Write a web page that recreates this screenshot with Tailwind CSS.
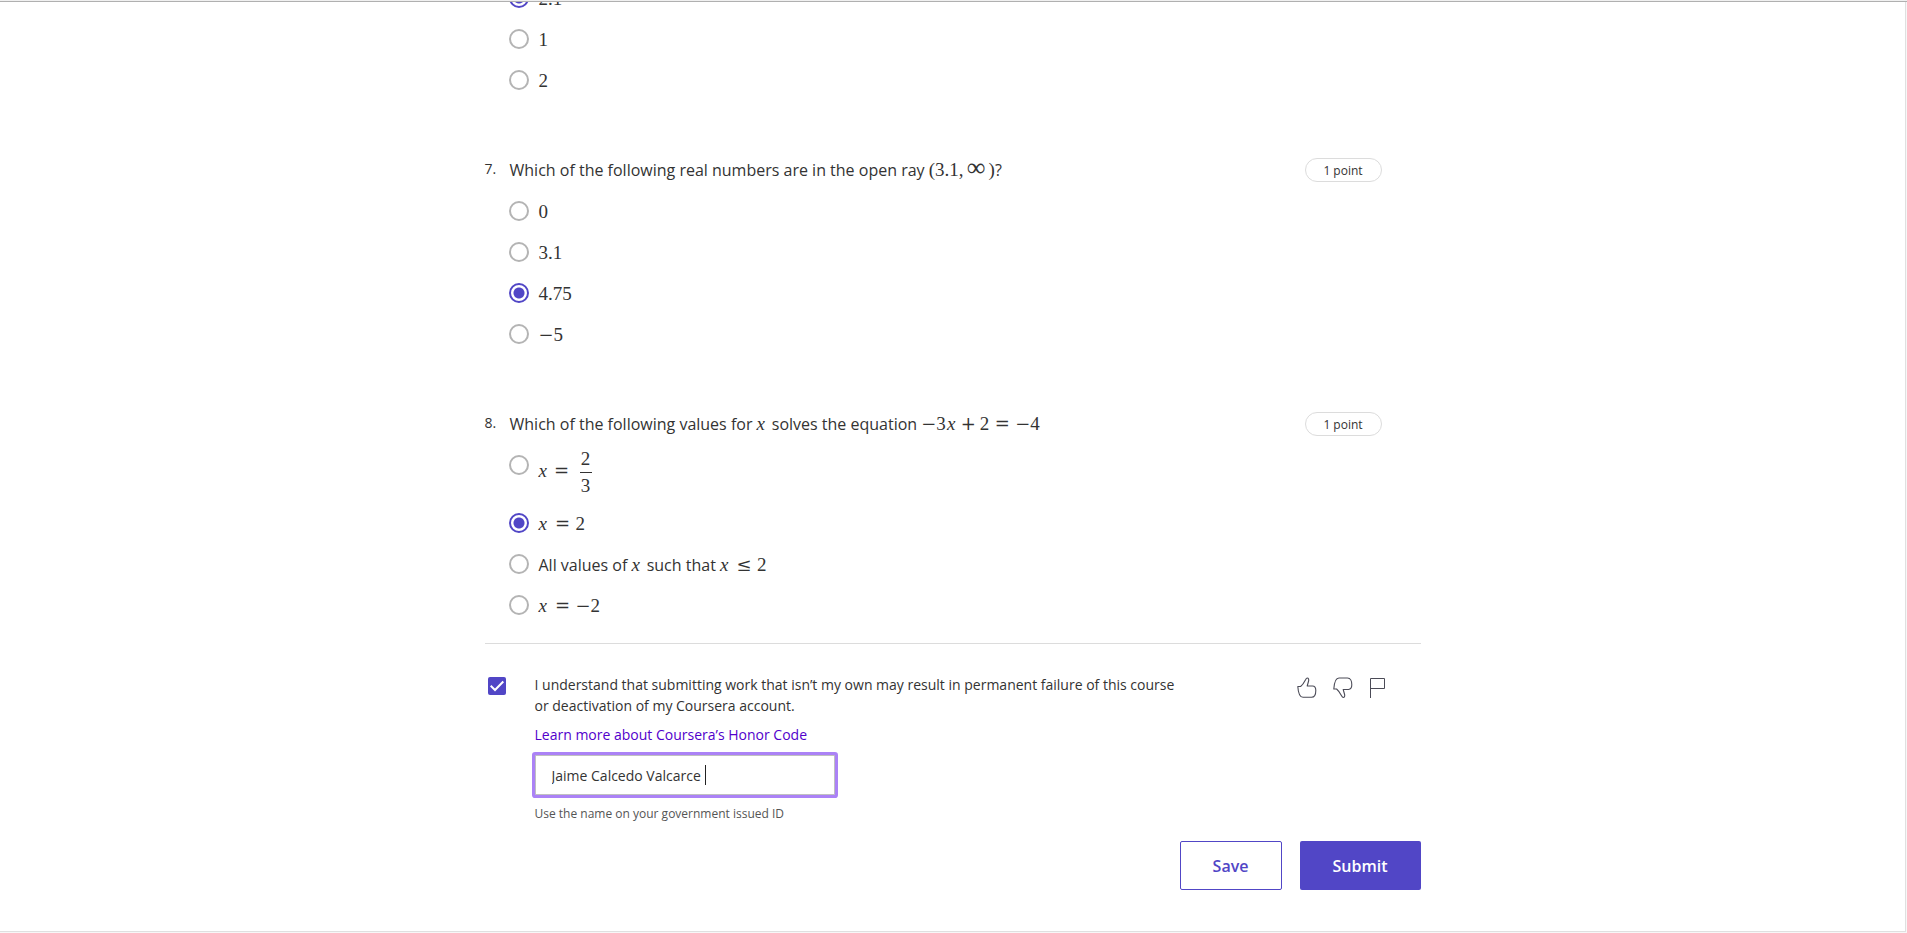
<!DOCTYPE html>
<html lang="en">
<head>
<meta charset="utf-8">
<title>Quiz</title>
<script src="https://cdn.jsdelivr.net/npm/@tailwindcss/browser@4"></script>
</head>
<body class="min-h-screen flex flex-col bg-[#f7f7f7] font-['Open_Sans','Noto_Sans',sans-serif] text-[#333333] overflow-hidden">
<div class="h-0.5 shrink-0 bg-[#f0f0f0] border-b border-[#b0b0b0]"></div>
<main class="flex-1 mr-px mb-px bg-white border-r border-b border-[#e0e0e0] overflow-hidden">
<form class="mx-auto max-w-[936px] pb-10">

  <fieldset class="-mt-[25px] ml-6 mb-[58px]">
    <label class="flex items-center gap-2.5 h-[41px]"><input type="radio" name="q6" checked class="appearance-none size-5 shrink-0 rounded-full border-2 border-[#5146c6] bg-[radial-gradient(circle,#5146c6_5px,transparent_6px)]"><span class="font-['Liberation_Serif',serif] text-[19px] leading-6 pt-0.5">2.1</span></label>
    <label class="flex items-center gap-2.5 h-[41px]"><input type="radio" name="q6" class="appearance-none size-5 shrink-0 rounded-full border-2 border-[#b4b4b4]"><span class="font-['Liberation_Serif',serif] text-[19px] leading-6 pt-0.5">1</span></label>
    <label class="flex items-center gap-2.5 h-[41px]"><input type="radio" name="q6" class="appearance-none size-5 shrink-0 rounded-full border-2 border-[#b4b4b4]"><span class="font-['Liberation_Serif',serif] text-[19px] leading-6 pt-0.5">2</span></label>
  </fieldset>

  <section class="mb-[58px]">
    <div class="flex items-start h-6 mb-2 pr-[39px]">
      <span class="w-[25px] shrink-0 text-sm leading-[22px]">7.</span>
      <h2 id="q7" class="flex-1 text-base leading-6">Which of the following real numbers are in the open ray <span class="font-['Liberation_Serif',serif] text-[19px] leading-6">(3.1,<span class="inline-block w-[25px] text-center text-[26px] leading-4">∞</span>)</span>?</h2>
      <span class="w-[77px] h-6 rounded-full border border-[#dcdcdc] text-xs leading-[23px] text-center">1 point</span>
    </div>
    <div role="radiogroup" aria-labelledby="q7" class="ml-6">
      <label class="flex items-center gap-2.5 h-[41px]"><input type="radio" name="q7" class="appearance-none size-5 shrink-0 rounded-full border-2 border-[#b4b4b4]"><span class="font-['Liberation_Serif',serif] text-[19px] leading-6 pt-0.5">0</span></label>
      <label class="flex items-center gap-2.5 h-[41px]"><input type="radio" name="q7" class="appearance-none size-5 shrink-0 rounded-full border-2 border-[#b4b4b4]"><span class="font-['Liberation_Serif',serif] text-[19px] leading-6 pt-0.5">3.1</span></label>
      <label class="flex items-center gap-2.5 h-[41px]"><input type="radio" name="q7" checked class="appearance-none size-5 shrink-0 rounded-full border-2 border-[#5146c6] bg-[radial-gradient(circle,#5146c6_5px,transparent_6px)]"><span class="font-['Liberation_Serif',serif] text-[19px] leading-6 pt-0.5">4.75</span></label>
      <label class="flex items-center gap-2.5 h-[41px]"><input type="radio" name="q7" class="appearance-none size-5 shrink-0 rounded-full border-2 border-[#b4b4b4]"><span class="font-['Liberation_Serif',serif] text-[19px] leading-6 pt-0.5"><span class="inline-block w-[15px] font-['DejaVu_Serif',serif] text-lg leading-4">−</span>5</span></label>
    </div>
  </section>

  <section class="pb-[18px] border-b border-[#dcdcdc]">
    <div class="flex items-start h-6 mb-2 pr-[39px]">
      <span class="w-[25px] shrink-0 text-sm leading-[22px]">8.</span>
      <h2 id="q8" class="flex-1 text-base leading-6">Which of the following values for <span class="font-['Liberation_Serif',serif] text-[19px] leading-6"><i class="inline-block w-[11px]">x</i></span> solves the equation <span class="font-['Liberation_Serif',serif] text-[19px] leading-6"><span class="inline-block w-[15px] font-['DejaVu_Serif',serif] text-lg leading-4">−</span>3<i class="inline-block w-[11px] text-center">x</i><span class="inline-block w-[23px] text-center font-['DejaVu_Serif',serif] text-lg leading-4">+</span>2<span class="inline-block w-[26px] text-center font-['DejaVu_Serif',serif] text-lg leading-4">=</span><span class="inline-block w-[15px] font-['DejaVu_Serif',serif] text-lg leading-4">−</span>4</span></h2>
      <span class="w-[77px] h-6 rounded-full border border-[#dcdcdc] text-xs leading-[23px] text-center">1 point</span>
    </div>
    <div role="radiogroup" aria-labelledby="q8" class="ml-6">
      <label class="flex items-start gap-2.5 h-[58px]"><input type="radio" name="q8" class="appearance-none size-5 mt-[11px] shrink-0 rounded-full border-2 border-[#b4b4b4]"><span class="flex items-center pt-0.5 font-['Liberation_Serif',serif] text-[19px] leading-[26px]"><i class="w-[11px] pb-1">x</i><span class="w-6 pb-1 text-center font-['DejaVu_Serif',serif] text-lg">=</span><span class="flex flex-col items-center ml-1.5 w-3"><span>2</span><span class="w-3 h-px bg-[#333333]"></span><span>3</span></span></span></label>
      <label class="flex items-center gap-2.5 h-[41px]"><input type="radio" name="q8" checked class="appearance-none size-5 shrink-0 rounded-full border-2 border-[#5146c6] bg-[radial-gradient(circle,#5146c6_5px,transparent_6px)]"><span class="font-['Liberation_Serif',serif] text-[19px] leading-6 pt-0.5"><i class="inline-block w-[11px]">x</i><span class="inline-block w-[26px] text-center font-['DejaVu_Serif',serif] text-lg leading-4">=</span>2</span></label>
      <label class="flex items-center gap-2.5 h-[41px]"><input type="radio" name="q8" class="appearance-none size-5 shrink-0 rounded-full border-2 border-[#b4b4b4]"><span class="text-base leading-6 pt-0.5">All values of <i class="inline-block w-[11px] font-['Liberation_Serif',serif] text-[19px] leading-6">x</i> such that <span class="font-['Liberation_Serif',serif] text-[19px] leading-6"><i class="inline-block w-[11px]">x</i><span class="inline-block w-[26px] text-center font-['DejaVu_Serif',serif] text-lg leading-4">≤</span>2</span></span></label>
      <label class="flex items-center gap-2.5 h-[41px]"><input type="radio" name="q8" class="appearance-none size-5 shrink-0 rounded-full border-2 border-[#b4b4b4]"><span class="font-['Liberation_Serif',serif] text-[19px] leading-6 pt-0.5"><i class="inline-block w-[11px]">x</i><span class="inline-block w-[26px] text-center font-['DejaVu_Serif',serif] text-lg leading-4">=</span><span class="inline-block w-[15px] font-['DejaVu_Serif',serif] text-lg leading-4">−</span>2</span></label>
    </div>
  </section>

  <div class="flex items-start pt-[30px] pl-[3px]">
    <span class="relative size-[18px] mt-[3px] shrink-0">
      <input id="honor" type="checkbox" checked class="block appearance-none size-[18px] rounded-xs bg-[#5146c6]">
      <svg class="absolute inset-0 pointer-events-none" width="18" height="18" viewBox="0 0 18 18" fill="none" stroke="#fff" stroke-width="2"><path d="M2.7 8.8 7 13 15.3 4.5"/></svg>
    </span>
    <div class="ml-[29px] w-[650px] text-sm leading-[21px]">
      <label for="honor" class="block">I understand that submitting work that isn’t my own may result in permanent failure of this course or deactivation of my Coursera account.</label>
      <a href="#" class="block mt-2 text-[#5200cc]">Learn more about Coursera’s Honor Code</a>
      <div class="relative mt-2.5 w-[300px]">
        <input id="name" type="text" value="Jaime Calcedo Valcarce " aria-describedby="hint" aria-label="Name" class="block w-full h-10 px-4 border border-[#c0c0c0] ring-3 ring-[#ab82f6] rounded-[1px] outline-none text-sm bg-white">
        <span class="absolute left-[170px] top-2.5 w-px h-5 bg-[#222222]"></span>
      </div>
      <p id="hint" class="mt-[9px] text-xs leading-5 text-[#555555]">Use the name on your government issued ID</p>
    </div>
    <div class="flex gap-4 ml-auto mr-8 mt-[3px]">
      <button type="button" aria-label="Like" class="size-5"><svg width="20" height="22" viewBox="0 0 20 22" fill="none" stroke="#4b4b57" stroke-width="1.1" stroke-linejoin="round"><path d="M.8 9.5H3.600C5.500 8 7.600 4.500 8.700 2.400 9.200 1.300 9.700 1 10.300 1 11.500 1 12 2.500 11.600 4L10.200 9H15.500C18 9 18.800 11 18.800 13.500 18.800 17 17.500 20.300 14.500 20.300H6C3 20.300 1.300 17 .8 9.500Z"/></svg></button>
      <button type="button" aria-label="Dislike" class="size-5"><svg width="20" height="22" viewBox="0 0 20 22" fill="none" stroke="#4b4b57" stroke-width="1.1" stroke-linejoin="round"><path d="M.8 12H3.600C5.500 13.500 7.600 17 8.700 19.100 9.200 20.200 9.700 20.500 10.300 20.500 11.500 20.500 12 19 11.600 17.500L10.200 12.500H15.500C18 12.300 18.800 10 18.800 7.800 18.800 4 17.500 1 14.500 1H6C3 1 1.300 4.500 .8 12Z"/></svg></button>
      <button type="button" aria-label="Report" class="size-5"><svg width="20" height="22" viewBox="0 0 20 22" fill="none" stroke="#4b4b57"><path d="M1.500 21V1.500H15.500V11.500H1.500"/></svg></button>
    </div>
  </div>

  <div class="flex justify-end gap-[18px] mt-[17px]">
    <button type="button" class="w-[102px] h-[49px] border border-[#5146c6] rounded-xs text-base font-semibold text-[#5146c6]">Save</button>
    <button type="submit" class="w-[121px] h-[49px] rounded-xs bg-[#5146c6] text-base font-semibold text-white">Submit</button>
  </div>
</form>
</main>
</body>
</html>
